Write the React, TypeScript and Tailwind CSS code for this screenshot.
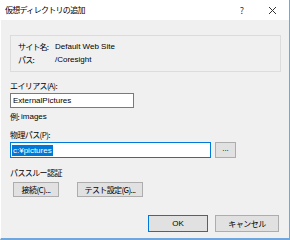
import React from "react";

const jp = { fontFamily: '"Noto Sans CJK JP", "Liberation Sans", sans-serif' };
const lat = { fontFamily: '"Liberation Sans", sans-serif' };

export default function App() {
  return (
    <div
      className="w-[290px] h-[240px] bg-[#f0f0f0] border-r border-b-2 border-[#6fa6dc] border-l border-l-white flex flex-col text-[8px] text-black leading-none overflow-hidden"
      style={jp}
    >
      {/* title bar */}
      <div className="h-[20px] bg-white flex items-center shrink-0">
        <span className="pl-[4px] text-[8px] tracking-[-0.7px] text-black">仮想ディレクトリの追加</span>
        <span className="ml-auto mr-[24px] text-[9px] text-[#333]">?</span>
        <svg width="9" height="9" viewBox="0 0 9 9" className="mr-[12px]">
          <path d="M1 1 L8 8 M8 1 L1 8" stroke="#333" strokeWidth="1" />
        </svg>
      </div>

      <div className="flex flex-col px-[9px] pt-[15px]">
        {/* group box */}
        <div className="w-[271px] h-[37px] border border-[#dcdcdc] flex flex-col justify-center gap-[5px] pl-[7px]">
          <div className="flex items-center">
            <span className="w-[37px] tracking-[-0.8px]">サイト名:</span>
            <span style={lat}>Default Web Site</span>
          </div>
          <div className="flex items-center">
            <span className="w-[37px] tracking-[-0.8px]">パス:</span>
            <span style={lat}>/Coresight</span>
          </div>
        </div>

        <div className="mt-[10px] tracking-[-0.6px]">エイリアス(A):</div>
        <div
          className="mt-[3px] w-[124px] h-[15px] bg-white border border-[#7a7a7a] flex items-center pl-[2px]"
          style={lat}
        >
          ExternalPictures
        </div>
        <div className="mt-[5px] flex items-center">
          <span className="tracking-[-0.6px]">例:</span>
          <span className="ml-[2px]" style={lat}>images</span>
        </div>

        <div className="mt-[10px] tracking-[-0.6px]">物理パス(P):</div>
        <div className="mt-[3px] flex items-center">
          <div className="w-[201px] h-[16px] bg-white border border-[#0078d7] flex items-center pl-[1px]">
            <span className="bg-[#0078d7] text-white px-[1px] leading-[11px]" style={lat}>
              c:¥pictures
            </span>
          </div>
          <div className="ml-[4px] w-[21px] h-[16px] bg-[#e1e1e1] border border-[#adadad] flex items-center justify-center pb-[3px] text-[8px]" style={lat}>
            ...
          </div>
        </div>

        <div className="mt-[11px] tracking-[-0.6px]">パススルー認証</div>
        <div className="mt-[5px] pl-[3px] flex items-center gap-[18px]">
          <div className="w-[46px] h-[15px] bg-[#e1e1e1] border border-[#adadad] flex items-center justify-center tracking-[-0.5px]">
            接続(C)...
          </div>
          <div className="w-[66px] h-[15px] bg-[#e1e1e1] border border-[#adadad] flex items-center justify-center tracking-[-0.6px]">
            テスト設定(G)...
          </div>
        </div>

        <div className="mt-[18px] flex justify-end pr-[1px] gap-[7px]">
          <div className="w-[60px] h-[17px] bg-[#e1e1e1] border border-[#0078d7] flex items-center justify-center" style={lat}>
            OK
          </div>
          <div className="w-[64px] h-[17px] bg-[#e1e1e1] border border-[#adadad] flex items-center justify-center tracking-[-0.5px]">
            キャンセル
          </div>
        </div>
      </div>
    </div>
  );
}
